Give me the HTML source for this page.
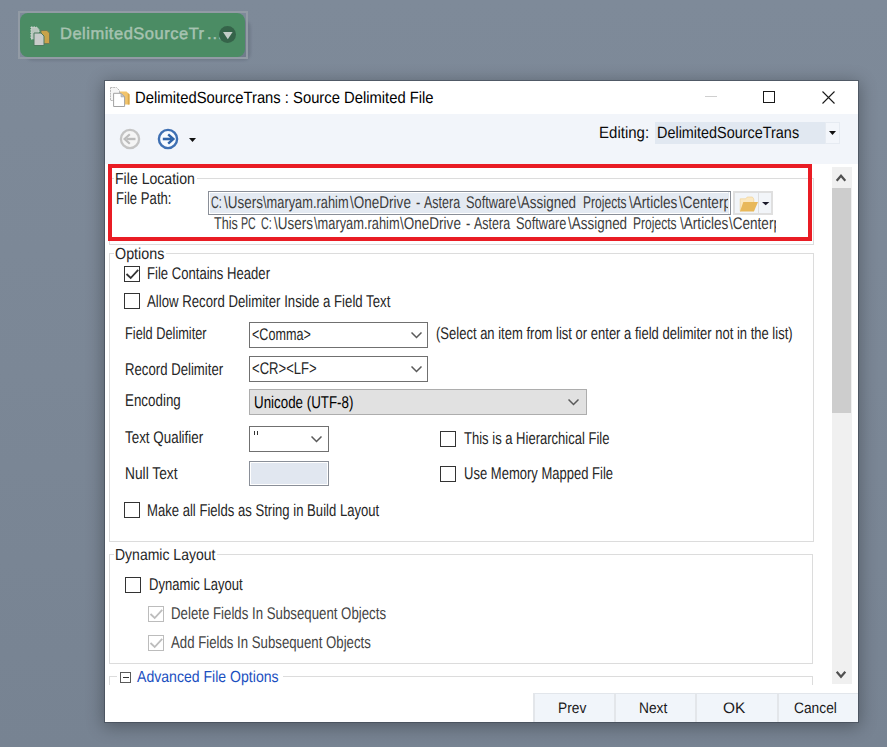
<!DOCTYPE html>
<html>
<head>
<meta charset="utf-8">
<title>DelimitedSourceTrans : Source Delimited File</title>
<style>
html,body{margin:0;padding:0;}
body{width:887px;height:747px;overflow:hidden;position:relative;background:linear-gradient(180deg,#7e8a99 0%,#7b8796 50%,#778392 100%);font-family:"Liberation Sans",sans-serif;font-size:14px;color:#1c1c1c;}
.abs{position:absolute;}
.t{position:absolute;white-space:pre;font-size:17.0px;line-height:20px;height:20px;transform-origin:0 50%;}
.tg{font-size:16.0px;line-height:20px;height:20px;}
.tb{font-size:15.2px;line-height:20px;height:20px;}
.tt{font-size:16.3px;line-height:20px;height:20px;}
/* node */
#nodeOutline{left:18px;top:11px;width:230px;height:48px;border:2px solid #929ba5;box-sizing:border-box;}
#nodeShadow{left:25px;top:20px;width:226px;height:41px;border-radius:8px;background:rgba(84,94,108,.30);filter:blur(1px);}
#node{left:20px;top:13px;width:225px;height:44px;border-radius:8px;background:#4b8c64;}
.nt{font-size:16.5px;line-height:22px;height:22px;color:#a7c3b1;-webkit-text-stroke:0.45px #a7c3b1;transform:skewX(.1deg);}
#nodeBtn{left:218.800px;top:25.500px;width:17.400px;height:17.400px;border-radius:50%;background:#356349;}
/* dialog */
#dlg{left:105px;top:81px;width:753px;height:641px;background:#fff;box-shadow:0 0 0 1px rgba(62,70,82,.6),0 3px 16px 2px rgba(0,0,0,.30);}
#title{left:0;top:0;width:753px;height:33px;background:#fff;}
#tool{left:0;top:33px;width:753px;height:50px;background:#f2f5fa;}
.grp{position:absolute;border:1px solid #dcdcdc;box-sizing:border-box;}
.cb{position:absolute;width:16px;height:16px;box-sizing:border-box;border:1px solid #333;background:#fff;}
.cb.dis{border-color:#bcbcbc;background:#fff;}
.combo{position:absolute;box-sizing:border-box;border:1px solid #707070;background:#fff;}
.btn{position:absolute;top:612px;height:29px;width:81px;box-sizing:border-box;background:#f1f5fa;border-top:1px solid #e2e6eb;border-left:2px solid #e3e6ea;}
</style>
</head>
<body>
<!-- canvas node -->
<div class="abs" id="nodeShadow"></div>
<div class="abs" id="nodeOutline"></div>
<div class="abs" id="node"></div>
<svg class="abs" style="left:30px;top:25.600px" width="21" height="21" viewBox="0 0 21 21">
  <path d="M1 1h5.500l2.500 2.500v9.500h-8z" fill="#b9c6bd" stroke="#d5dcd7" stroke-width="1" stroke-dasharray="1.500 1"/>
  <path d="M11 4.500h6l2.500 2.500v10.500h-8.500z" fill="#c9a24a" stroke="#6f7a56" stroke-width="1"/>
  <path d="M4 7h7l3 3v9.500h-10z" fill="#c9cccb" stroke="#4c7a5e" stroke-width="1"/>
</svg>
<div class="t nt" id="nodeText" style="left:60px;top:22px;letter-spacing:0.505px">DelimitedSourceTr</div><div class="t nt" id="nodeDots" style="left:206.9px;top:22px;letter-spacing:0.9px">...</div>
<div class="abs" id="nodeBtn"></div>
<svg class="abs" style="left:223px;top:31.500px" width="10" height="8" viewBox="0 0 10 8"><path d="M0 0h9.600l-4.800 7.200z" fill="#c3ccc7"/></svg>

<!-- dialog -->
<div class="abs" id="dlg">
  <div class="abs" id="title"></div>
  <div class="abs" id="tool"></div>
  <svg class="abs" style="left:4px;top:5px" width="22" height="22" viewBox="0 0 22 22">
    <path d="M1.500 1.500h6l3 3v10h-9z" fill="#f6f6f6" stroke="#b8b8b8" stroke-dasharray="2 .7"/>
    <path d="M11 5.500h6.500l3 3v10h-9.500z" fill="#f2c46c"/>
    <path d="M18.800 7v11.500h1.700v-10z" fill="#d8a84c"/>
    <path d="M4.600 7.300h7.400l3.600 3.600v9.600h-11z" fill="#fff" stroke="#a2a2a2"/>
    <path d="M12 7.300v3.600h3.600z" fill="#c9c9c9" stroke="#a2a2a2" stroke-width=".6"/>
  </svg>
  <div class="t tt" id="titleText" style="left:29.90px;top:6px;color:#000;transform:scaleX(0.9082) skewX(.1deg)">DelimitedSourceTrans : Source Delimited File</div>
  <!-- window controls -->
  <div class="abs" style="left:600px;top:15px;width:12px;height:1px;background:#cfcfcf"></div>
  <div class="abs" style="left:658px;top:10px;width:12px;height:12px;border:1px solid #1a1a1a;box-sizing:border-box"></div>
  <svg class="abs" style="left:717px;top:10px" width="13" height="13" viewBox="0 0 13 13"><path d="M0.500 0.500l12 12M12.500 0.500l-12 12" stroke="#1a1a1a" stroke-width="1.100" fill="none"/></svg>

  <!-- toolbar -->
  <svg class="abs" style="left:12.500px;top:45.600px" width="24" height="24" viewBox="0 0 24 24">
    <circle cx="12" cy="12" r="9.100" fill="#f5f5f5" stroke="#c4c4c4" stroke-width="2.300"/>
    <path d="M17.500 12H8.500" stroke="#bcbcbc" stroke-width="2.400" fill="none"/>
    <path d="M11.800 7.300L6.600 12l5.200 4.700" stroke="#bcbcbc" stroke-width="2.200" fill="none"/>
  </svg>
  <svg class="abs" style="left:50.800px;top:45.700px" width="24" height="24" viewBox="0 0 24 24">
    <circle cx="12" cy="12" r="9.100" fill="#f8fbff" stroke="#3f70b3" stroke-width="2.400"/>
    <path d="M6.800 12h9" stroke="#2e63a8" stroke-width="2.600" fill="none"/>
    <path d="M12.200 7.300L17.400 12l-5.200 4.700" stroke="#2e63a8" stroke-width="2.400" fill="none"/>
  </svg>
  <svg class="abs" style="left:83.500px;top:56.500px" width="7" height="4" viewBox="0 0 7 4"><path d="M0 0h7l-3.500 4z" fill="#111"/></svg>
  <div class="t tt" id="editLbl" style="left:493.70px;top:41px;color:#0a0a0a;transform:scaleX(0.9224) skewX(.1deg)">Editing:</div>
  <div class="abs" style="left:550px;top:41px;width:185px;height:22px;background:#e1e8f1"></div>
  <div class="abs" style="left:720px;top:41px;width:15px;height:22px;background:#f3f6fb;box-shadow:inset 0 0 0 1px #e6ebf2"></div>
  <div class="t tt" id="editVal" style="left:551.90px;top:41px;color:#0a0a0a;transform:scaleX(0.8855) skewX(.1deg)">DelimitedSourceTrans</div>
  <svg class="abs" style="left:724px;top:50px" width="7" height="4" viewBox="0 0 7 4"><path d="M0 0h7l-3.500 4z" fill="#111"/></svg>

  <!-- content area frame -->
  <div class="abs" style="left:0;top:83px;width:753px;height:529px;background:#fff"></div>

  <!-- File Location group -->
  <div class="grp" style="left:4px;top:97px;width:705px;height:67px"></div>
  <div class="abs" style="left:9px;top:89px;width:83px;height:16px;background:#fff"></div>
  <div class="t tg" id="fl" style="left:10.20px;top:88px;color:#262626;transform:scaleX(0.8807) skewX(.1deg)">File Location</div>
  <div class="t" id="fp" style="left:11.00px;top:108px;color:#262626;transform:scaleX(0.7728) skewX(.1deg)">File Path:</div>
  <div class="combo" style="left:103px;top:110px;width:523px;height:24px;border-color:#8a8f98;background:#e4eaf2;box-shadow:inset 1px 1px 0 #fff, inset -1px -1px 0 #fff;overflow:hidden">
    <div class="t" style="left:1.50px;top:1px;color:#3c3c3c;transform:scaleX(0.6353) skewX(.1deg)">C:</div>
    <div class="t" style="left:14.60px;top:1px;color:#3c3c3c;transform:scaleX(0.7919) skewX(.1deg)">\Users</div>
    <div class="t" style="left:54.30px;top:1px;color:#3c3c3c;transform:scaleX(0.7551) skewX(.1deg)">\maryam.rahim</div>
    <div class="t" style="left:141.00px;top:1px;color:#3c3c3c;transform:scaleX(0.7958) skewX(.1deg)">\OneDrive</div>
    <div class="t" style="left:206.60px;top:1px;color:#3c3c3c;transform:scaleX(0.7581) skewX(.1deg)">-</div>
    <div class="t" style="left:214.50px;top:1px;color:#3c3c3c;transform:scaleX(0.7346) skewX(.1deg)">Astera</div>
    <div class="t" style="left:256.80px;top:1px;color:#3c3c3c;transform:scaleX(0.7512) skewX(.1deg)">Software</div>
    <div class="t" style="left:308.10px;top:1px;color:#3c3c3c;transform:scaleX(0.7915) skewX(.1deg)">\Assigned</div>
    <div class="t" style="left:373.90px;top:1px;color:#3c3c3c;transform:scaleX(0.7098) skewX(.1deg)">Projects</div>
    <div class="t" style="left:420.30px;top:1px;color:#3c3c3c;transform:scaleX(0.7988) skewX(.1deg)">\Articles</div>
    <div class="t" style="left:469.90px;top:1px;color:#3c3c3c;transform:scaleX(0.7964) skewX(.1deg)">\Centerprise</div>
    <div class="abs" style="right:0;top:0;width:2px;height:22px;background:#e4eaf2;box-shadow:inset -1px 0 0 #fff"></div>
  </div>
  <div class="abs" style="left:107px;top:135px;width:564px;height:18px;overflow:hidden">
    <div class="t" style="left:1.70px;top:-2px;color:#3c3c3c;transform:scaleX(0.7409) skewX(.1deg)">This</div>
    <div class="t" style="left:29.00px;top:-2px;color:#3c3c3c;transform:scaleX(0.6265) skewX(.1deg)">PC</div>
    <div class="t" style="left:48.90px;top:-2px;color:#3c3c3c;transform:scaleX(0.6353) skewX(.1deg)">C:</div>
    <div class="t" style="left:62.00px;top:-2px;color:#3c3c3c;transform:scaleX(0.7919) skewX(.1deg)">\Users</div>
    <div class="t" style="left:101.70px;top:-2px;color:#3c3c3c;transform:scaleX(0.7551) skewX(.1deg)">\maryam.rahim</div>
    <div class="t" style="left:188.40px;top:-2px;color:#3c3c3c;transform:scaleX(0.7958) skewX(.1deg)">\OneDrive</div>
    <div class="t" style="left:254.00px;top:-2px;color:#3c3c3c;transform:scaleX(0.7581) skewX(.1deg)">-</div>
    <div class="t" style="left:261.90px;top:-2px;color:#3c3c3c;transform:scaleX(0.7346) skewX(.1deg)">Astera</div>
    <div class="t" style="left:304.20px;top:-2px;color:#3c3c3c;transform:scaleX(0.7512) skewX(.1deg)">Software</div>
    <div class="t" style="left:355.50px;top:-2px;color:#3c3c3c;transform:scaleX(0.7915) skewX(.1deg)">\Assigned</div>
    <div class="t" style="left:421.30px;top:-2px;color:#3c3c3c;transform:scaleX(0.7098) skewX(.1deg)">Projects</div>
    <div class="t" style="left:467.70px;top:-2px;color:#3c3c3c;transform:scaleX(0.7988) skewX(.1deg)">\Articles</div>
    <div class="t" style="left:517.30px;top:-2px;color:#3c3c3c;transform:scaleX(0.7964) skewX(.1deg)">\Centerprise</div>
  </div>
  <!-- folder button -->
  <div class="abs" style="left:628px;top:110px;width:40px;height:24px;background:#f2f5f9;border:2px solid #dfdfdf;box-sizing:border-box"></div>
  <div class="abs" style="left:653px;top:112px;width:1px;height:20px;background:#dedede"></div>
  <svg class="abs" style="left:634px;top:114px" width="20" height="18" viewBox="0 0 20 18">
    <path d="M1.200 16.200V3.800h5.600l1.400-1.800h5.200l1.400 2v3z" fill="#fbe8c0" stroke="#f0cf8e" stroke-width=".6"/>
    <path d="M1 16.400L4.300 6.900H19l-4.100 9.500z" fill="#e8b85a"/>
  </svg>
  <svg class="abs" style="left:656.600px;top:120.900px" width="8" height="4" viewBox="0 0 8 4"><path d="M0 0h7.400l-3.700 3.300z" fill="#1a1a2a"/></svg>
  <!-- red highlight -->
  <div class="abs" style="left:3px;top:83px;width:704px;height:77px;border:4px solid #e91c24;box-sizing:border-box"></div>

  <!-- Options group -->
  <div class="grp" style="left:4px;top:172px;width:705px;height:289px"></div>
  <div class="abs" style="left:9px;top:164px;width:52px;height:16px;background:#fff"></div>
  <div class="t tg" id="opt" style="left:10.40px;top:163px;color:#262626;transform:scaleX(0.8941) skewX(.1deg)">Options</div>

  <div class="cb" style="left:19px;top:185px"></div>
  <svg class="abs" style="left:19px;top:185px" width="16" height="16" viewBox="0 0 16 16"><path d="M2.500 8l4.200 4 7.500-8.200" stroke="#333" stroke-width="1.800" fill="none"/></svg>
  <div class="t" id="c1" style="left:42.20px;top:183px;color:#262626;transform:scaleX(0.7702) skewX(.1deg)">File Contains Header</div>
  <div class="cb" style="left:19px;top:212px"></div>
  <div class="t" id="c2" style="left:42.20px;top:211px;color:#262626;transform:scaleX(0.7764) skewX(.1deg)">Allow Record Delimiter Inside a Field Text</div>

  <div class="t" id="l1" style="left:19.70px;top:243px;color:#262626;transform:scaleX(0.7511) skewX(.1deg)">Field Delimiter</div>
  <div class="combo" style="left:144px;top:241px;width:179px;height:26px"></div>
  <div class="t" id="v1" style="left:147.30px;top:244px;color:#262626;transform:scaleX(0.7408) skewX(.1deg)">&lt;Comma&gt;</div>
  <svg class="abs" style="left:306px;top:251px" width="11" height="7" viewBox="0 0 11 7"><path d="M0.500 0.500l5 5 5-5" stroke="#5a5a5a" stroke-width="1.500" fill="none"/></svg>
  <div class="t" id="hint" style="left:330.90px;top:243px;color:#262626;transform:scaleX(0.7656) skewX(.1deg)">(Select an item from list or enter a field delimiter not in the list)</div>

  <div class="t" id="l2" style="left:19.70px;top:279px;color:#262626;transform:scaleX(0.7749) skewX(.1deg)">Record Delimiter</div>
  <div class="combo" style="left:144px;top:275px;width:179px;height:26px"></div>
  <div class="t" id="v2" style="left:147.20px;top:278px;color:#262626;transform:scaleX(0.7692) skewX(.1deg)">&lt;CR&gt;&lt;LF&gt;</div>
  <svg class="abs" style="left:306px;top:285px" width="11" height="7" viewBox="0 0 11 7"><path d="M0.500 0.500l5 5 5-5" stroke="#5a5a5a" stroke-width="1.500" fill="none"/></svg>

  <div class="t" id="l3" style="left:19.70px;top:310px;color:#262626;transform:scaleX(0.7871) skewX(.1deg)">Encoding</div>
  <div class="combo" style="left:144px;top:308px;width:338px;height:26px;background:#e1e1e1;border-color:#adadad"></div>
  <div class="t" id="v3" style="left:149.00px;top:312px;color:#000;transform:scaleX(0.7852) skewX(.1deg)">Unicode (UTF-8)</div>
  <svg class="abs" style="left:463px;top:318px" width="11" height="7" viewBox="0 0 11 7"><path d="M0.500 0.500l5 5 5-5" stroke="#5a5a5a" stroke-width="1.500" fill="none"/></svg>

  <div class="t" id="l4" style="left:19.70px;top:347px;color:#262626;transform:scaleX(0.7883) skewX(.1deg)">Text Qualifier</div>
  <div class="combo" style="left:144px;top:345px;width:80px;height:26px"></div>
  <div class="abs" style="left:148.500px;top:350px;width:1.500px;height:4px;background:#333"></div>
  <div class="abs" style="left:151.500px;top:350px;width:1.500px;height:4px;background:#333"></div>
  <svg class="abs" style="left:206px;top:355px" width="11" height="7" viewBox="0 0 11 7"><path d="M0.500 0.500l5 5 5-5" stroke="#5a5a5a" stroke-width="1.500" fill="none"/></svg>

  <div class="t" id="l5" style="left:19.70px;top:383px;color:#262626;transform:scaleX(0.8091) skewX(.1deg)">Null Text</div>
  <div class="combo" style="left:144px;top:380px;width:80px;height:25px;background:#e1e7f0;border-color:#8a8f98;box-shadow:inset 1px 1px 0 #fff, inset -1px -1px 0 #fff"></div>

  <div class="cb" style="left:335px;top:350px"></div>
  <div class="t" id="c3" style="left:359.40px;top:348px;color:#262626;transform:scaleX(0.7662) skewX(.1deg)">This is a Hierarchical File</div>
  <div class="cb" style="left:335px;top:385px"></div>
  <div class="t" id="c4" style="left:359.40px;top:383px;color:#262626;transform:scaleX(0.7661) skewX(.1deg)">Use Memory Mapped File</div>

  <div class="cb" style="left:19px;top:421px"></div>
  <div class="t" id="c5" style="left:42.20px;top:420px;color:#262626;transform:scaleX(0.7703) skewX(.1deg)">Make all Fields as String in Build Layout</div>

  <!-- Dynamic Layout group -->
  <div class="grp" style="left:4px;top:473px;width:704px;height:110px"></div>
  <div class="abs" style="left:9px;top:465px;width:103px;height:16px;background:#fff"></div>
  <div class="t tg" id="dyn" style="left:10.00px;top:464px;color:#262626;transform:scaleX(0.8752) skewX(.1deg)">Dynamic Layout</div>
  <div class="cb" style="left:20px;top:496px"></div>
  <div class="t" id="c6" style="left:43.80px;top:494px;color:#262626;transform:scaleX(0.7687) skewX(.1deg)">Dynamic Layout</div>
  <div class="cb dis" style="left:43px;top:525px"></div>
  <svg class="abs" style="left:43px;top:525px" width="16" height="16" viewBox="0 0 16 16"><path d="M2.500 8l4.200 4 7.500-8.200" stroke="#bdbdbd" stroke-width="1.800" fill="none"/></svg>
  <div class="t" id="c7" style="left:66.20px;top:523px;color:#444444;transform:scaleX(0.7792) skewX(.1deg)">Delete Fields In Subsequent Objects</div>
  <div class="cb dis" style="left:43px;top:554px"></div>
  <svg class="abs" style="left:43px;top:554px" width="16" height="16" viewBox="0 0 16 16"><path d="M2.500 8l4.200 4 7.500-8.200" stroke="#bdbdbd" stroke-width="1.800" fill="none"/></svg>
  <div class="t" id="c8" style="left:66.20px;top:552px;color:#444444;transform:scaleX(0.7773) skewX(.1deg)">Add Fields In Subsequent Objects</div>

  <!-- Advanced File Options -->
  <div class="abs" style="left:4px;top:595px;width:704px;height:9px;border:1px solid #dcdcdc;border-bottom:none;box-sizing:border-box"></div>
  <div class="abs" style="left:12px;top:588px;width:166px;height:16px;background:#fff"></div>
  <div class="abs" style="left:15px;top:591px;width:11px;height:11px;border:1px solid #5a5a5a;box-sizing:border-box;background:#fff"></div>
  <div class="abs" style="left:17.500px;top:596px;width:6px;height:1px;background:#333"></div>
  <div class="t tg" id="adv" style="left:32.00px;top:586px;color:#1b4fbf;transform:scaleX(0.8796) skewX(.1deg)">Advanced File Options</div>

  <!-- scrollbar -->
  <div class="abs" style="left:727px;top:86px;width:20px;height:517px;background:#f0f0f0"></div>
  <div class="abs" style="left:727px;top:107px;width:19px;height:225px;background:#cdcdcd"></div>
  <svg class="abs" style="left:730px;top:92px" width="12" height="10" viewBox="0 0 12 10"><path d="M1.700 7.800l4.300-5 4.300 5" stroke="#505050" stroke-width="2.200" fill="none"/></svg>
  <svg class="abs" style="left:730px;top:589px" width="12" height="10" viewBox="0 0 12 10"><path d="M1.700 1.800l4.300 5 4.300-5" stroke="#505050" stroke-width="2.200" fill="none"/></svg>

  <!-- bottom buttons -->
  <div class="btn" style="left:428px;width:81px"></div>
  <div class="btn" style="left:509px;width:81px"></div>
  <div class="btn" style="left:590px;width:82px"></div>
  <div class="btn" style="left:672px;width:81px"></div>
  <div class="t tb" id="bPrev" style="left:453.20px;top:617px;color:#1a1a1a;transform:scaleX(0.9061) skewX(.1deg)">Prev</div>
  <div class="t tb" id="bNext" style="left:534.20px;top:617px;color:#1a1a1a;transform:scaleX(0.9061) skewX(.1deg)">Next</div>
  <div class="t tb" id="bOK" style="left:618.20px;top:617px;color:#1a1a1a;transform:scaleX(1.0158) skewX(.1deg)">OK</div>
  <div class="t tb" id="bCancel" style="left:688.90px;top:617px;color:#1a1a1a;transform:scaleX(0.9073) skewX(.1deg)">Cancel</div>
</div>
</body>
</html>
